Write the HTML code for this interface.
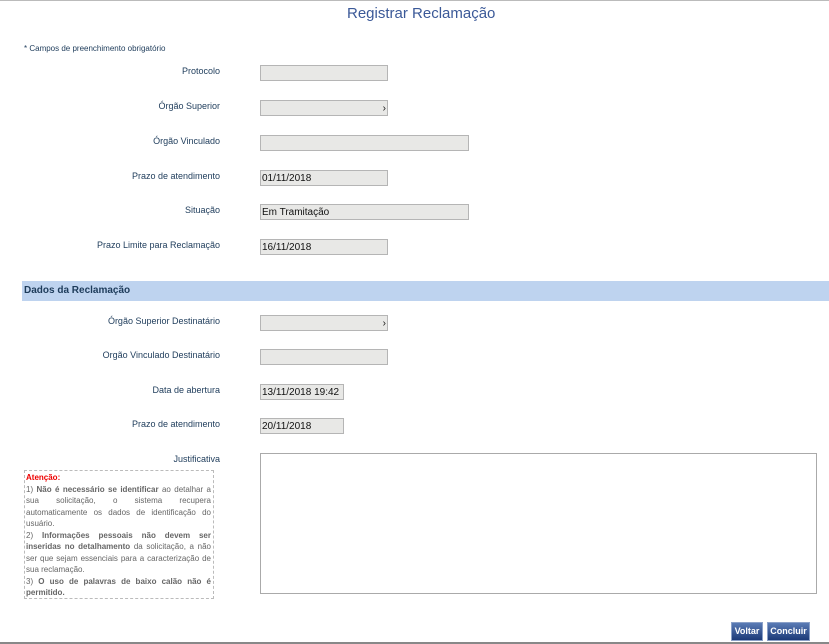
<!DOCTYPE html>
<html><head><meta charset="utf-8"><style>
body{margin:0;width:829px;height:644px;position:relative;background:#fff;font-family:"Liberation Sans",Arial,sans-serif;overflow:hidden}
.a{position:absolute}
.l{position:absolute;right:609px;font-size:9px;color:#1d3b5a;white-space:nowrap}
.f{position:absolute;left:260px;height:16px;background:#e8e8e6;border:1px solid #b5b5b5;box-sizing:border-box;font-size:10px;color:#111;padding:2px 1px;line-height:11px}
.btn{position:absolute;top:622px;height:19px;background:linear-gradient(#5a7bb5,#1c3a78);border:1px solid #8aa0c8;box-sizing:border-box;color:#fff;font-weight:bold;font-size:9px;line-height:17px;text-align:center}
</style></head><body>
<div class="a" style="left:0;top:0;width:829px;height:1px;background:#bbb"></div>
<div class="a" style="left:347px;top:5px;font-size:15px;color:#3b5998">Registrar Reclamação</div>
<div class="a" style="left:24px;top:44px;font-size:8px;color:#1d3b5a">* Campos de preenchimento obrigatório</div>

<div class="l" style="top:66px">Protocolo</div><div class="f" style="top:65px;width:128px"></div>
<div class="l" style="top:101px">Órgão Superior</div><div class="f" style="top:100px;width:128px;text-align:right">›</div>
<div class="l" style="top:136px">Órgão Vinculado</div><div class="f" style="top:135px;width:209px"></div>
<div class="l" style="top:171px">Prazo de atendimento</div><div class="f" style="top:170px;width:128px">01/11/2018</div>
<div class="l" style="top:205px">Situação</div><div class="f" style="top:204px;width:209px">Em Tramitação</div>
<div class="l" style="top:240px">Prazo Limite para Reclamação</div><div class="f" style="top:239px;width:128px">16/11/2018</div>

<div class="a" style="left:22px;top:281px;width:807px;height:20px;background:#bed3ef"></div>
<div class="a" style="left:24px;top:285px;font-size:10px;font-weight:bold;color:#1d3b5a">Dados da Reclamação</div>

<div class="l" style="top:316px">Órgão Superior Destinatário</div><div class="f" style="top:315px;width:128px;text-align:right">›</div>
<div class="l" style="top:350px">Orgão Vinculado Destinatário</div><div class="f" style="top:349px;width:128px"></div>
<div class="l" style="top:385px">Data de abertura</div><div class="f" style="top:384px;width:84px">13/11/2018 19:42</div>
<div class="l" style="top:419px">Prazo de atendimento</div><div class="f" style="top:418px;width:84px">20/11/2018</div>
<div class="l" style="top:454px">Justificativa</div>
<div class="a" style="left:260px;top:453px;width:557px;height:141px;border:1px solid #aaa;box-sizing:border-box"></div>

<div class="a" style="left:24px;top:470px;width:190px;height:129px;border:1px dashed #bbb;box-sizing:border-box;font-size:8px;color:#666;line-height:11.5px;text-align:justify;padding:1px 2px 0 1px">
<div style="color:#e00;font-weight:bold">Atenção:</div>
1) <b>Não é necessário se identificar</b> ao detalhar a sua solicitação, o sistema recupera automaticamente os dados de identificação do usuário.<br>
2) <b>Informações pessoais não devem ser inseridas no detalhamento</b> da solicitação, a não ser que sejam essenciais para a caracterização de sua reclamação.<br>
3) <b>O uso de palavras de baixo calão não é permitido.</b>
</div>

<div class="btn" style="left:731px;width:32px">Voltar</div>
<div class="btn" style="left:767px;width:43px">Concluir</div>
<div class="a" style="left:0;top:642px;width:829px;height:2px;background:#888"></div>
</body></html>
